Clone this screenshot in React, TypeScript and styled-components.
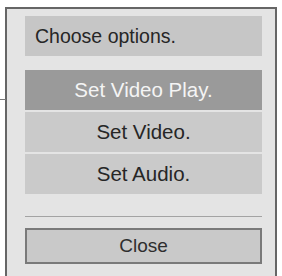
import React from "react";
import styled, { createGlobalStyle } from "styled-components";

const Global = createGlobalStyle`
  html, body { margin: 0; padding: 0; background: #ffffff; }
  body { width: 282px; height: 276px; overflow: hidden; font-family: "Liberation Sans", Arial, sans-serif; }
`;

const Frame = styled.div`
  position: relative;
  box-sizing: border-box;
  margin: 7px 0 0 5px;
  width: 272px;
  height: 280px;
  border: 2px solid #666666;
  border-bottom: none;
  background: #e4e4e4;
  padding: 7px 13px 0 18px;
  display: flex;
  flex-direction: column;
  &::before {
    content: "";
    position: absolute;
    left: -7px;
    top: 90px;
    width: 6px;
    height: 1px;
    background: #777;
  }
`;

const Header = styled.div`
  height: 40px;
  background: #c6c6c6;
  color: #262626;
  font-size: 19.5px;
  display: flex;
  align-items: center;
  padding-left: 10px;
`;

const Options = styled.div`
  margin-top: 14px;
  display: flex;
  flex-direction: column;
  gap: 2px;
`;

const Option = styled.div<{ $active?: boolean }>`
  height: 40px;
  background: ${(p) => (p.$active ? "#9a9a9a" : "#cacaca")};
  color: ${(p) => (p.$active ? "#f4f4f4" : "#262626")};
  font-size: 20.5px;
  display: flex;
  align-items: center;
  justify-content: center;
`;

const Divider = styled.div`
  margin-top: 22px;
  height: 1px;
  background: #a3a3a3;
`;

const CloseButton = styled.div`
  box-sizing: border-box;
  margin-top: 11px;
  height: 36px;
  border: 2px solid #7a7a7a;
  background: #c9c9c9;
  color: #2e2e2e;
  font-size: 19px;
  display: flex;
  align-items: center;
  justify-content: center;
`;

export default function App() {
  return (
    <>
      <Global />
      <Frame>
        <Header>Choose options.</Header>
        <Options>
          <Option $active>Set Video Play.</Option>
          <Option>Set Video.</Option>
          <Option>Set Audio.</Option>
        </Options>
        <Divider />
        <CloseButton>Close</CloseButton>
      </Frame>
    </>
  );
}
